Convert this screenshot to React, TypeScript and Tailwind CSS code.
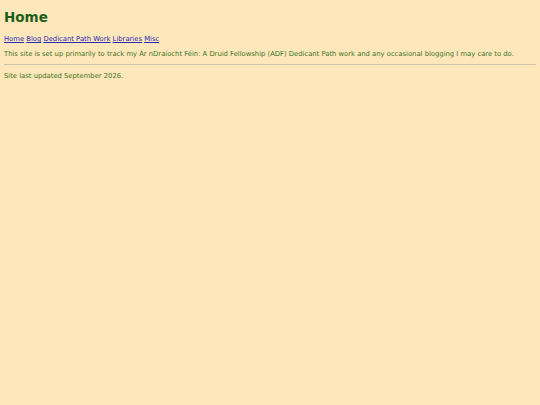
export default function App() {
  return (
    <div className="min-h-[405px] bg-[#fde7bb] px-[4px] pt-[7px] text-[#3d7424] [font-family:'DejaVu_Sans',Verdana,sans-serif]">
      <h1 className="text-[13.5px] font-bold leading-[20px] text-[#1e5e1a]">Home</h1>
      <nav className="mt-[7px] text-[6.8px] leading-[10px]">
        <a href="#" className="text-[#2a2ab4] underline">Home</a>{" "}
        <a href="#" className="text-[#2a2ab4] underline">Blog</a>{" "}
        <a href="#" className="text-[#2a2ab4] underline">Dedicant Path Work</a>{" "}
        <a href="#" className="text-[#2a2ab4] underline">Libraries</a>{" "}
        <a href="#" className="text-[#2a2ab4] underline">Misc</a>
      </nav>
      <p className="mt-[5px] text-[6.8px] leading-[10px]">
        This site is set up primarily to track my Ár nDraíocht Féin: A Druid Fellowship (ADF) Dedicant Path work and any occasional blogging I may care to do.
      </p>
      <hr className="mt-[5px] border-t border-[#cbc3ac]" />
      <p className="mt-[6px] text-[6.8px] leading-[10px]">Site last updated September 2026.</p>
    </div>
  );
}
